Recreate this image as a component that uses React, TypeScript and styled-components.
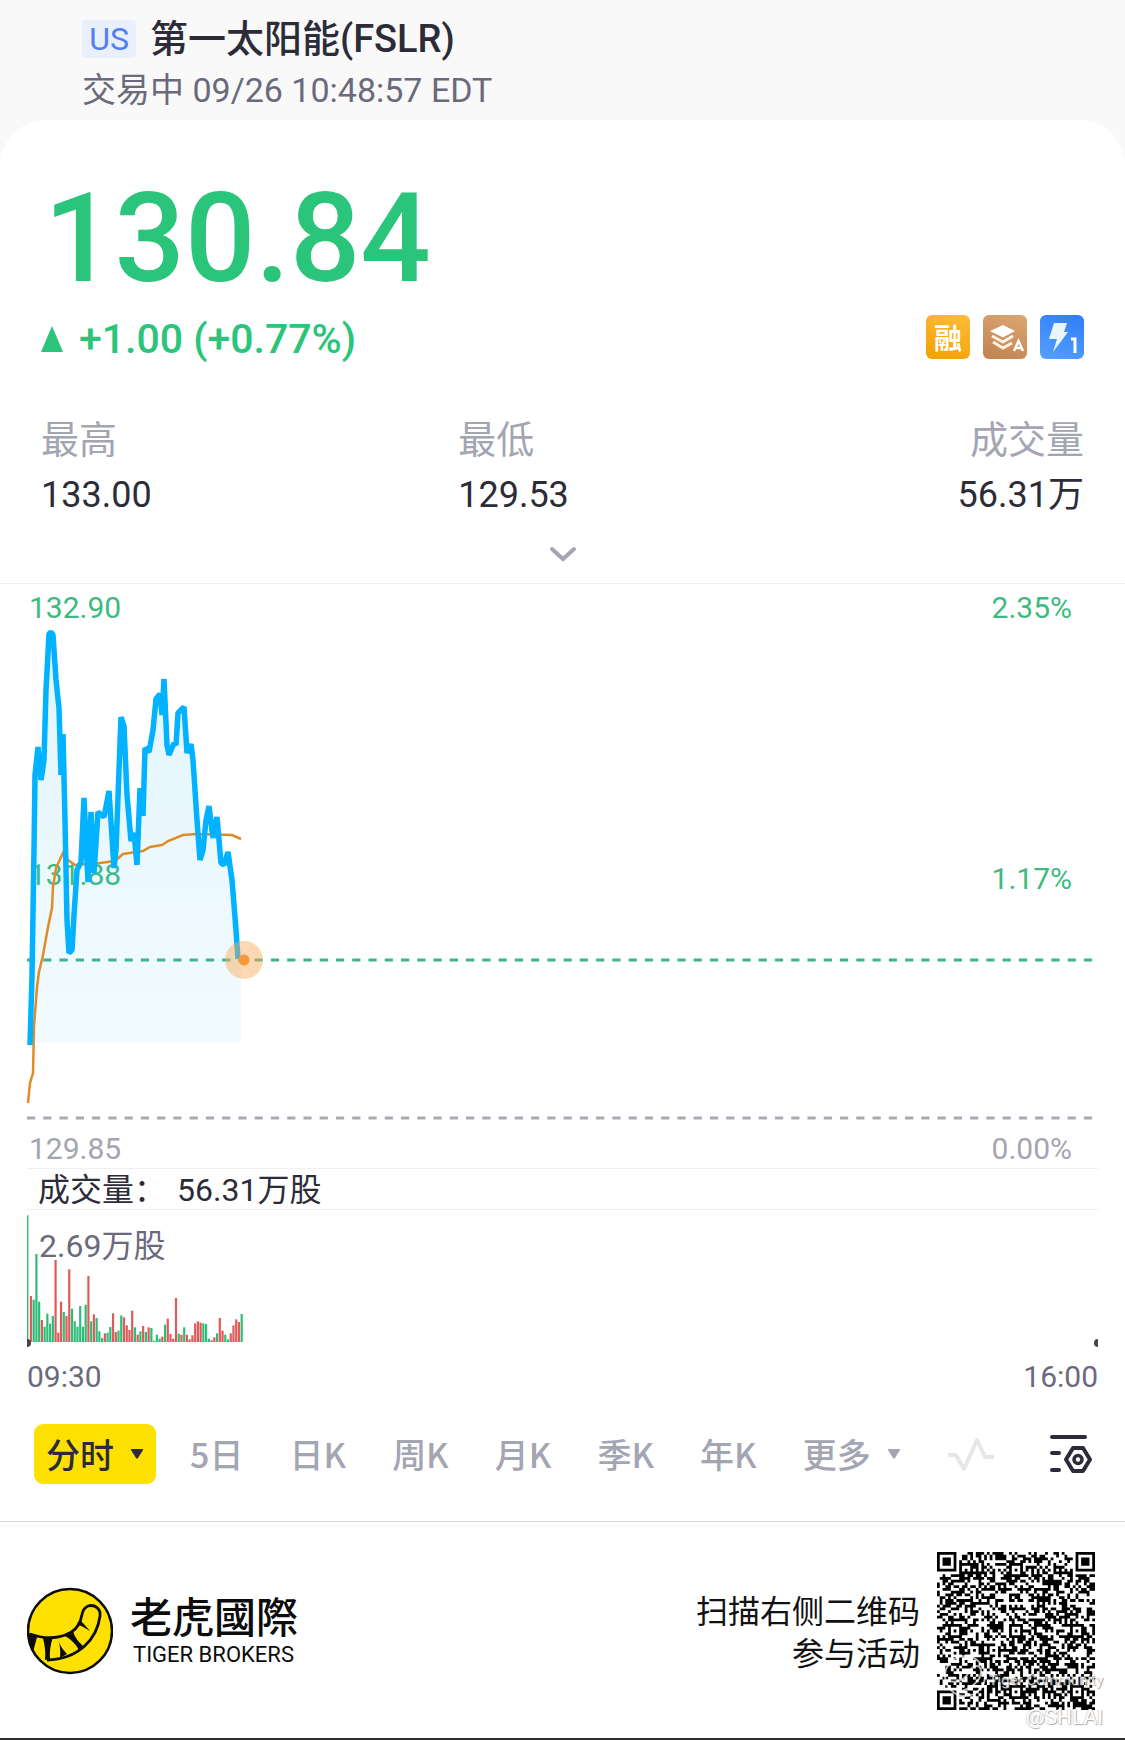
import React from "react";
import styled, { createGlobalStyle } from "styled-components";

const GREEN = "#2ac57b";
const INK = "#2c2c38";
const MUTED = "#a4a5b2";
const NUMERIC = `Roboto, "Noto Sans CJK SC", sans-serif`;

const GlobalStyle = createGlobalStyle`
  * { box-sizing: border-box; }
  body { margin: 0; background: #fff; }
  button { font: inherit; border: 0; padding: 0; background: none; color: inherit; cursor: pointer; }
  svg { display: block; }
`;

const Page = styled.main`
  font-family: "Noto Sans CJK SC", "Noto Sans", sans-serif;
  color: ${INK};
  background: #f9f9fa;
`;

const Header = styled.header`
  padding: 16px 82px 8px;
  font-family: ${NUMERIC};
`;

const TitleRow = styled.div`
  display: flex;
  align-items: center;
  gap: 14px;
  height: 46px;
`;

const Market = styled.span`
  width: 54px;
  border-radius: 4px;
  background: #e9effb;
  color: #4f80f5;
  font-size: 32px;
  line-height: 38px;
  text-align: center;
`;

const Title = styled.h1`
  margin: 0;
  font-size: 38px;
  font-weight: 500;
  line-height: 46px;
`;

const Status = styled.p`
  margin: 6px 0 0;
  color: #6b6a7b;
  font-size: 34px;
  line-height: 44px;
`;

const Panel = styled.section`
  border-radius: 46px 46px 0 0;
  background: #fff;
  padding: 59px 0 37px;
`;

const Price = styled.div`
  padding-left: 44px;
  color: ${GREEN};
  font-family: ${NUMERIC};
  font-size: 124px;
  font-weight: 500;
  line-height: 120px;
`;

const ChangeRow = styled.div`
  display: flex;
  align-items: center;
  justify-content: space-between;
  height: 44px;
  margin: 16px 41px 0;
`;

const Change = styled.div`
  display: flex;
  align-items: center;
  gap: 16px;
  padding-top: 4px;
  color: ${GREEN};
  font-family: ${NUMERIC};
  font-size: 41px;
  font-weight: 500;
  line-height: 46px;
`;

const Chips = styled.div`
  display: flex;
  gap: 13px;
`;

const Chip = styled.span<{ $from: string; $to: string }>`
  display: grid;
  place-items: center;
  width: 44px;
  height: 44px;
  border-radius: 6px;
  background: linear-gradient(200deg, ${(p) => p.$from}, ${(p) => p.$to});
  color: #fff;
  font-size: 28px;
  font-weight: 700;
  line-height: 40px;
`;

const Stats = styled.dl`
  display: grid;
  grid-template-columns: 2fr 2fr 1fr;
  margin: 56px 41px 0;
`;

const Stat = styled.div<{ $end?: boolean }>`
  text-align: ${(p) => (p.$end ? "right" : "left")};
  white-space: nowrap;
`;

const StatLabel = styled.dt`
  color: ${MUTED};
  font-size: 38px;
  line-height: 44px;
`;

const StatValue = styled.dd`
  margin: 12px 0 0;
  font-family: ${NUMERIC};
  font-size: 36px;
  line-height: 48px;
`;

const Expand = styled.button`
  display: grid;
  place-items: center;
  width: 60px;
  height: 36px;
  margin: 17px auto 11px;
`;

const ChartSection = styled.section`
  border-top: 1px solid #efeff2;
  padding: 0 27px;
  font-family: ${NUMERIC};
`;

const PriceChart = styled.div`
  display: grid;
  height: 584px;
  > * { grid-area: 1 / 1; }
`;

const Axis = styled.div`
  display: flex;
  justify-content: space-between;
  padding: 6px 26px 1px 2px;
`;

const AxisColumn = styled.div<{ $end?: boolean }>`
  display: flex;
  flex-direction: column;
  justify-content: space-between;
  text-align: ${(p) => (p.$end ? "right" : "left")};
`;

const AxisLabel = styled.span<{ $muted?: boolean; $above?: boolean }>`
  color: ${(p) => (p.$muted ? MUTED : "#3dbb7f")};
  font-size: 30px;
  line-height: 36px;
  padding-bottom: ${(p) => (p.$above ? "8px" : "0")};
`;

const Plot = styled.svg`
  width: 100%;
  height: 100%;
  overflow: visible;
`;

const VolumeTitle = styled.div`
  display: flex;
  gap: 11px;
  border: solid #efeff2;
  border-width: 1px 0;
  padding: 2px 0 0 11px;
  font-size: 32px;
  line-height: 38px;
`;

const VolumeChart = styled.div`
  display: grid;
  height: 138px;
  > * { grid-area: 1 / 1; }
`;

const VolumeMax = styled.span`
  padding: 16px 0 0 12px;
  color: #6b6a7b;
  font-size: 32px;
  line-height: 40px;
`;

const Times = styled.div`
  display: flex;
  justify-content: space-between;
  margin-top: 11px;
  color: #6b6a7b;
  font-size: 30px;
  line-height: 36px;
`;

const Tabs = styled.nav`
  display: flex;
  align-items: center;
  gap: 34px;
  height: 60px;
  margin: 29px 32px 0 34px;
`;

const TabGroup = styled.div`
  display: flex;
  flex: 1;
  align-items: center;
  justify-content: space-between;
`;

const Tab = styled.button<{ $active?: boolean }>`
  display: flex;
  align-items: center;
  gap: 16px;
  height: 60px;
  padding: ${(p) => (p.$active ? "0 12px" : "0")};
  border-radius: 9px;
  background: ${(p) => (p.$active ? "#ffe100" : "none")};
  color: ${(p) => (p.$active ? INK : MUTED)};
  font-size: 34px;
  font-weight: 500;
  line-height: 60px;
`;

const SettingsButton = styled.button`
  padding: 0 0 0 8px;
`;

const Footer = styled.footer`
  display: flex;
  align-items: center;
  justify-content: space-between;
  border-top: 1px solid #d9d9dc;
  border-bottom: 2px solid #2c2c2e;
  background: #fff;
  padding: 30px 30px 28px 27px;
`;

const Brand = styled.div`
  display: flex;
  align-items: center;
  gap: 17px;
  color: #0c0c0c;
`;

const BrandName = styled.div`
  font-family: "Noto Sans CJK TC", sans-serif;
  font-size: 42px;
  font-weight: 500;
  line-height: 46px;
`;

const BrandLatin = styled.div`
  padding: 3px 0 1px 3px;
  font-family: Roboto, sans-serif;
  font-size: 22px;
  line-height: 28px;
`;

const Promo = styled.div`
  display: flex;
  align-items: center;
  gap: 17px;
`;

const PromoText = styled.p`
  margin: 0 0 2px;
  color: #111;
  font-size: 32px;
  line-height: 42px;
  text-align: right;
`;

const QrBox = styled.div`
  position: relative;
`;

const Community = styled.span`
  position: absolute;
  right: -8px;
  bottom: 18px;
  color: rgba(255, 255, 255, 0.75);
  font-family: Roboto, sans-serif;
  font-size: 15px;
  line-height: 24px;
  text-shadow: 1px 1px 1px rgba(120, 120, 120, 0.7);
  white-space: nowrap;
`;

const Mark = styled.svg`
  position: absolute;
  left: 6px;
  bottom: 12px;
`;

const Author = styled.span`
  position: absolute;
  right: -8px;
  bottom: -20px;
  color: #fff;
  font-family: Roboto, sans-serif;
  font-size: 21px;
  line-height: 26px;
  text-shadow: 1px 1px 1px #aaa, -1px 0 1px #ddd;
`;

const price: [number, number][] = [
  [3, 461], [5, 391], [7, 266], [8, 191], [11, 163], [14, 196], [17, 176], [19, 106], [22, 50], [24, 48],
  [26, 51], [29, 96], [32, 124], [34, 191], [36, 150], [38, 236], [40, 336], [42, 369], [45, 366], [47, 331],
  [50, 286], [54, 278], [57, 214], [61, 298], [64, 228], [67, 289], [71, 228], [77, 233], [82, 207], [87, 284],
  [89, 266], [94, 133], [97, 142], [100, 211], [104, 257], [107, 249], [110, 281], [113, 204], [116, 232],
  [118, 164], [122, 168], [126, 146], [129, 115], [133, 110], [135, 131], [137, 95], [140, 161], [142, 171],
  [147, 159], [149, 161], [151, 129], [157, 123], [160, 169], [164, 160], [166, 176], [170, 236], [173, 276],
  [176, 266], [179, 236], [182, 222], [186, 254], [190, 233], [194, 279], [197, 281], [201, 268], [205, 296],
  [209, 346], [211, 375],
];

const average: [number, number][] = [
  [1, 519], [3, 499], [6, 489], [7, 443], [10, 403], [12, 388], [16, 371], [21, 343], [25, 324], [26, 303],
  [29, 284], [36, 269], [41, 276], [48, 281], [73, 279], [88, 277], [96, 270], [116, 267], [123, 263],
  [135, 261], [141, 257], [156, 251], [170, 250], [205, 251], [214, 255],
];

const points = (list: [number, number][]) => list.map((p) => p.join(",")).join(" ");

// One entry per minute; negative values are falling minutes.
const volume = [
  380, -138, 127, 264, 121, -66, 46, 85, 55, 78, -246, -28, -121, 90, -78, -218, 100, 62, 46, 108, 46, 112, -198,
  62, -83, 72, 32, 12, -26, 28, 45, -86, -30, 34, 80, -74, -50, -36, -94, 44, -22, 32, -48, 30, -44, 42, 4, 22, 10,
  -16, 52, -70, -24, -10, -132, 25, -22, 44, -22, -8, -20, -56, -62, -58, 56, 54, 10, -5, -14, 26, -72, -34, 22, 8,
  -26, -50, -68, -60, 84,
];

const QR_SIZE = 57;

function buildQr(): string {
  let seed = 20230926;
  const next = () => {
    seed = (seed * 1664525 + 1013904223) >>> 0;
    return seed / 4294967296;
  };
  const grid: boolean[][] = [];
  for (let y = 0; y < QR_SIZE; y++) {
    grid.push([]);
    for (let x = 0; x < QR_SIZE; x++) grid[y].push(next() < 0.52);
  }
  for (let i = 8; i < QR_SIZE - 8; i++) {
    grid[6][i] = i % 2 === 0;
    grid[i][6] = i % 2 === 0;
  }
  const ring = (cx: number, cy: number, reach: number, dark: number[]) => {
    for (let y = cy - reach; y <= cy + reach; y++)
      for (let x = cx - reach; x <= cx + reach; x++)
        if (grid[y] && x >= 0 && x < QR_SIZE)
          grid[y][x] = dark.includes(Math.max(Math.abs(x - cx), Math.abs(y - cy)));
  };
  ring(3, 3, 4, [0, 1, 3]);
  ring(QR_SIZE - 4, 3, 4, [0, 1, 3]);
  ring(3, QR_SIZE - 4, 4, [0, 1, 3]);
  [[28, 6], [6, 28], [28, 28], [50, 28], [28, 50], [50, 50]].forEach(([x, y]) => ring(x, y, 2, [0, 2]));
  return grid.map((row, y) => row.map((on, x) => (on ? `M${x} ${y}h1v1h-1z` : "")).join("")).join("");
}

const qrPath = buildQr();

const Caret = ({ color }: { color: string }) => (
  <svg width="14" height="12" viewBox="0 0 14 12" aria-hidden="true">
    <path d="M1.5 1h11q1 0 .5 1L8 10q-1 1.5-2 0L1 2q-.5-1 .5-1z" fill={color} />
  </svg>
);

const TigerLogo = () => (
  <svg width="86" height="88" viewBox="0 0 86 88" aria-hidden="true">
    <circle cx="43" cy="44" r="42" fill="#ffe100" stroke="#0c0c0c" strokeWidth="2.5" />
    <path
      d="M3 47C22 54 44 51 52 37C56 29 54 22 61 19C68 17 74 22 73 29C70 52 52 72 20 73"
      fill="none" stroke="#0c0c0c" strokeWidth="2.8"
    />
    <path
      d="M2 46l8 4-1 4-3 11-4-8zM16 51l10-1q-4 12-3 22l-5 1q1-10-2-22zM31 52q2 8 9 15l-7 4q1-10-2-19zM38 49l8-5q2 8 10 15l-4 4q-5-9-14-14zM50 37l3-4q4 4 10 11-6-4-13-7z"
      fill="#0c0c0c"
    />
  </svg>
);

const tabNames = ["5日", "日K", "周K", "月K", "季K", "年K"];

export default function App() {
  return (
    <Page>
      <GlobalStyle />
      <Header>
        <TitleRow>
          <Market>US</Market>
          <Title>第一太阳能(FSLR)</Title>
        </TitleRow>
        <Status>交易中 09/26 10:48:57 EDT</Status>
      </Header>

      <Panel>
        <Price>130.84</Price>
        <ChangeRow>
          <Change>
            <svg width="22" height="26" viewBox="0 0 22 26" aria-hidden="true">
              <path d="M11 0L22 26H0z" fill={GREEN} />
            </svg>
            +1.00 (+0.77%)
          </Change>
          <Chips>
            <Chip $from="#fcbd3c" $to="#f4a000">融</Chip>
            <Chip $from="#dca773" $to="#c08150">
              <svg width="44" height="44" viewBox="0 0 44 44" aria-label="A">
                <path d="M20 10l12 6-12 6.500L7 16z" fill="#fff" />
                <path d="M9 21l11 6 10-6M10 27l10 6 9-5" fill="none" stroke="#fff2e2" strokeWidth="3" />
                <path d="M31 36l4.500-10 4.500 10M32.500 33h6" fill="none" stroke="#fff" strokeWidth="2.400" />
              </svg>
            </Chip>
            <Chip $from="#2f7dfa" $to="#55a0ff">
              <svg width="44" height="44" viewBox="0 0 44 44" aria-label="1">
                <path d="M14 8h13l-3 9h4L13 37l4-13H9z" fill="#e9f5ff" />
                <path d="M31 24h4v14" fill="none" stroke="#fff" strokeWidth="3" />
              </svg>
            </Chip>
          </Chips>
        </ChangeRow>

        <Stats>
          <Stat>
            <StatLabel>最高</StatLabel>
            <StatValue>133.00</StatValue>
          </Stat>
          <Stat>
            <StatLabel>最低</StatLabel>
            <StatValue>129.53</StatValue>
          </Stat>
          <Stat $end>
            <StatLabel>成交量</StatLabel>
            <StatValue>56.31万</StatValue>
          </Stat>
        </Stats>
        <Expand aria-label="展开">
          <svg width="28" height="16" viewBox="0 0 28 16">
            <path d="M3 3l11 10L25 3" fill="none" stroke={MUTED} strokeWidth="4" strokeLinecap="round" />
          </svg>
        </Expand>

        <ChartSection>
          <PriceChart>
            <Axis>
              <AxisColumn>
                <AxisLabel>132.90</AxisLabel>
                <AxisLabel $above>131.88</AxisLabel>
                <AxisLabel $muted>129.85</AxisLabel>
              </AxisColumn>
              <AxisColumn $end>
                <AxisLabel>2.35%</AxisLabel>
                <AxisLabel>1.17%</AxisLabel>
                <AxisLabel $muted>0.00%</AxisLabel>
              </AxisColumn>
            </Axis>
            <Plot aria-hidden="true">
              <defs>
                <linearGradient id="area" x1="0" y1="0" x2="0" y2="1">
                  <stop offset="0" stopColor="#0aaef0" stopOpacity="0.12" />
                  <stop offset="1" stopColor="#0aaef0" stopOpacity="0.05" />
                </linearGradient>
              </defs>
              <polygon points={`${points(price)} 214,375 214,459 3,459`} fill="url(#area)" />
              <line x1="0" x2="100%" y1="376" y2="376" stroke="#3fb587" strokeWidth="3" strokeDasharray="8.200 8.060" />
              <line x1="0" x2="100%" y1="534" y2="534" stroke="#a9a9b3" strokeWidth="3" strokeDasharray="8.200 8.060" />
              <polyline points={points(average)} fill="none" stroke="#e08b26" strokeWidth="2.500" />
              <polyline points={points(price)} fill="none" stroke="#00b2ff" strokeWidth="5.500" strokeLinejoin="bevel" />
              <circle cx="217" cy="376" r="19" fill="#f7a955" fillOpacity="0.45" />
              <circle cx="217" cy="376" r="5.500" fill="#f6993a" />
            </Plot>
          </PriceChart>
          <VolumeTitle>
            <span>成交量：</span>
            <span>56.31万股</span>
          </VolumeTitle>
          <VolumeChart>
            <VolumeMax>2.69万股</VolumeMax>
            <Plot aria-hidden="true">
              {volume.map((v, i) => (
                <rect
                  key={i}
                  x={i === 0 ? 0 : i * 2.737 + 0.1}
                  y={132 - Math.abs(v) / 3}
                  width={i === 0 ? 1.4 : 2.2}
                  height={Math.abs(v) / 3}
                  fill={v < 0 ? "#e05a5a" : "#2cbd78"}
                />
              ))}
              <path d="M0 129a4 4 0 0 1 0 8z" fill="#444" />
              <svg x="100%" overflow="visible">
                <path d="M0 129a4 4 0 0 0 0 8z" fill="#444" />
              </svg>
            </Plot>
          </VolumeChart>
          <Times>
            <span>09:30</span>
            <span>16:00</span>
          </Times>
        </ChartSection>

        <Tabs>
          <Tab $active>
            分时
            <Caret color={INK} />
          </Tab>
          <TabGroup>
            {tabNames.map((name) => (
              <Tab key={name}>{name}</Tab>
            ))}
            <Tab>
              更多
              <Caret color={MUTED} />
            </Tab>
            <Tab aria-label="走势">
              <svg width="48" height="36" viewBox="0 0 48 36">
                <path d="M1 19h8l8 14L30 4l8 17h9" fill="none" stroke="#e6e6ea" strokeWidth="4" strokeLinejoin="round" />
              </svg>
            </Tab>
            <SettingsButton aria-label="设置">
              <svg width="44" height="42" viewBox="0 0 44 42" fill="none" stroke={INK} strokeWidth="4" strokeLinecap="round" strokeLinejoin="round">
                <path d="M3 4h33M3 20h7M3 37h7" />
                <path d="M24 15h10l7 11.500-7 11.500H24l-7-11.500z" />
                <circle cx="29" cy="26.500" r="4" strokeWidth="3.500" />
              </svg>
            </SettingsButton>
          </TabGroup>
        </Tabs>
      </Panel>

      <Footer>
        <Brand>
          <TigerLogo />
          <div>
            <BrandName>老虎國際</BrandName>
            <BrandLatin>TIGER BROKERS</BrandLatin>
          </div>
        </Brand>
        <Promo>
          <PromoText>
            扫描右侧二维码
            <br />
            参与活动
          </PromoText>
          <QrBox>
            <svg width="158" height="158" viewBox={`0 0 ${QR_SIZE} ${QR_SIZE}`} role="img" aria-label="二维码">
              <path d={qrPath} fill="#000" />
            </svg>
            <Mark width="44" height="44" viewBox="0 0 44 44" fill="none" stroke="#fff" strokeOpacity="0.7" strokeWidth="2">
              <circle cx="22" cy="22" r="20" />
              <path d="M2 26c12 4 20 0 24-8s12-8 12 0-10 18-24 20" />
            </Mark>
            <Community>Tiger Community</Community>
            <Author>@SHLAI</Author>
          </QrBox>
        </Promo>
      </Footer>
    </Page>
  );
}
